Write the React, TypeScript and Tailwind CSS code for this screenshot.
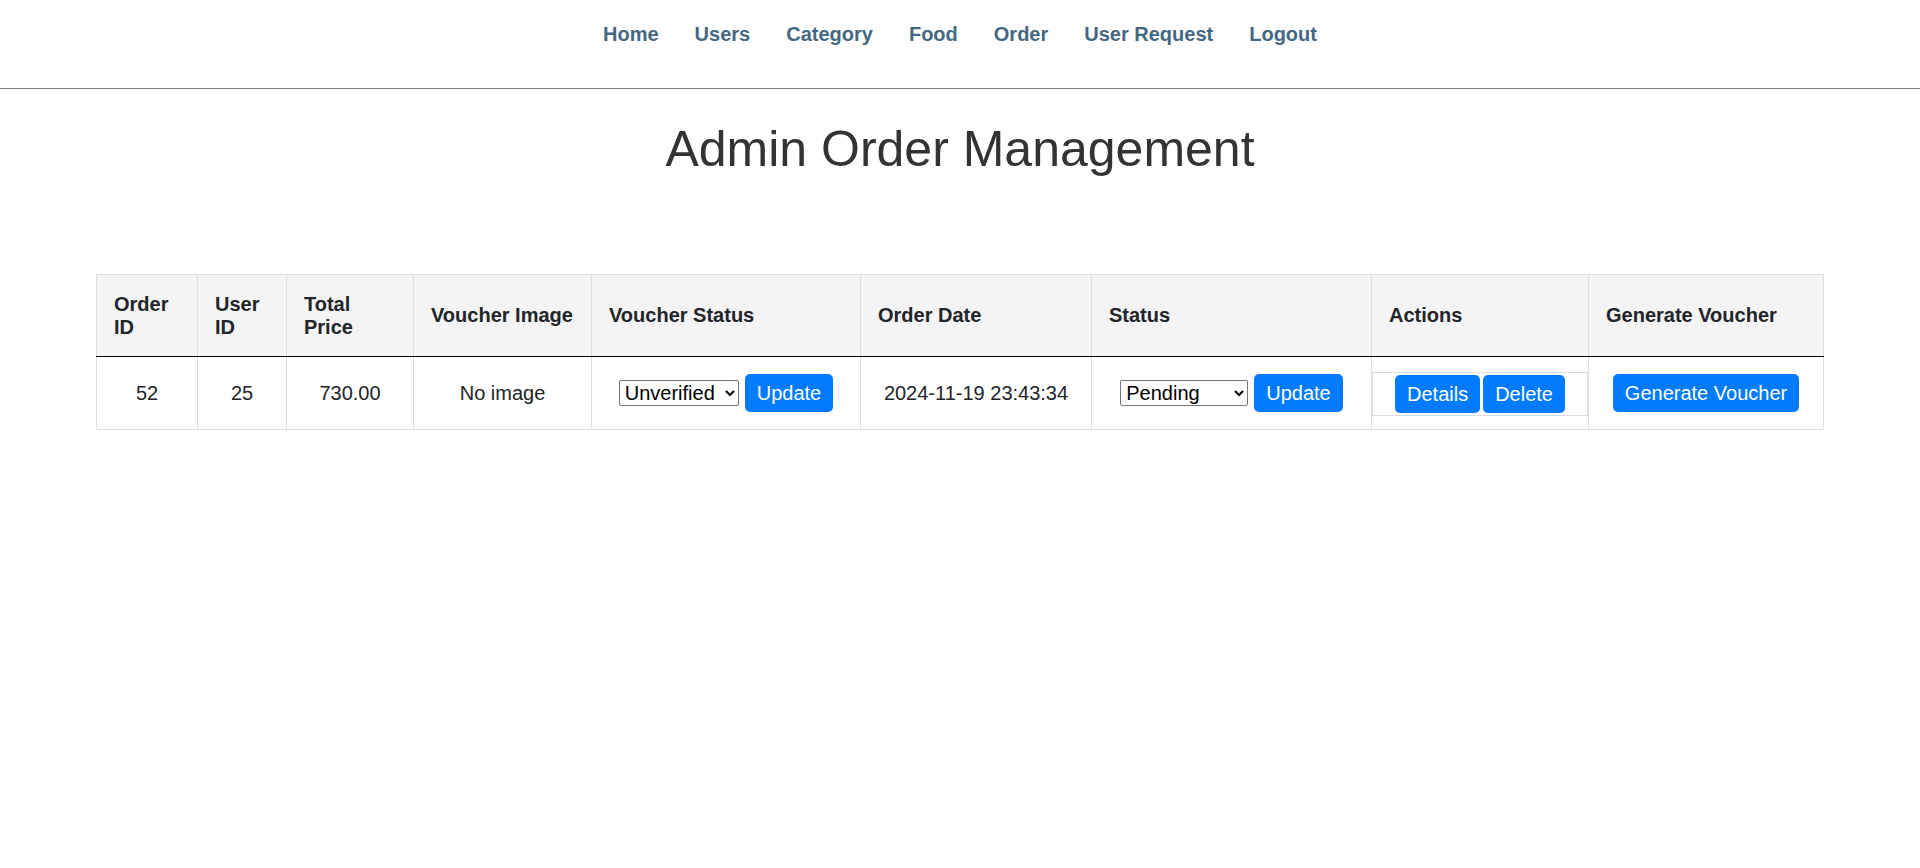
import { useState } from "react";
import type { ReactNode } from "react";

const navLinks = ["Home", "Users", "Category", "Food", "Order", "User Request", "Logout"];

const columns = [
  { label: "Order ID", width: "w-[101px]" },
  { label: "User ID", width: "w-[89px]" },
  { label: "Total Price", width: "w-[127px]" },
  { label: "Voucher Image", width: "w-[178px]" },
  { label: "Voucher Status", width: "w-[269px]" },
  { label: "Order Date", width: "w-[231px]" },
  { label: "Status", width: "w-[280px]" },
  { label: "Actions", width: "w-[217px]" },
  { label: "Generate Voucher", width: "w-[235px]" },
];

function ActionButton({ children }: { children: ReactNode }) {
  return (
    <button
      type="button"
      className="h-[38px] cursor-pointer rounded-[5px] bg-[#007bff] px-3 whitespace-nowrap text-white hover:bg-[#0056b3]"
    >
      {children}
    </button>
  );
}

function StatusForm({ label, options, width }: { label: string; options: string[]; width: string }) {
  const [value, setValue] = useState(options[0]);
  return (
    <form className="flex items-center justify-center gap-[6px]" onSubmit={(e) => e.preventDefault()}>
      <select
        aria-label={label}
        value={value}
        onChange={(e) => setValue(e.target.value)}
        className={`h-[26px] rounded-[2px] border border-[#767676] bg-white pl-px text-black ${width}`}
      >
        {options.map((option) => (
          <option key={option}>{option}</option>
        ))}
      </select>
      <ActionButton>Update</ActionButton>
    </form>
  );
}

function Cell({ children }: { children: ReactNode }) {
  return <td className="h-[73px] border-x border-b border-[#dddddd] text-center align-middle">{children}</td>;
}

export default function App() {
  return (
    <div className="min-h-screen bg-white font-['Liberation_Sans',Arial,sans-serif] text-[20px] leading-[23px] text-[#212529]">
      <header className="border-b border-[#808080] pt-[23px] pb-[42px]">
        <nav className="flex justify-center gap-9 font-bold text-[#456882]">
          {navLinks.map((link) => (
            <a key={link} href="#" className="hover:underline">
              {link}
            </a>
          ))}
        </nav>
      </header>
      <main className="px-[5%]">
        <h1 className="pt-[30px] pb-[95px] text-center text-[50px] leading-[60px] text-[#333333]">
          Admin Order Management
        </h1>
        <table className="w-full table-fixed border-collapse">
          <colgroup>
            {columns.map((column) => (
              <col key={column.label} className={column.width} />
            ))}
          </colgroup>
          <thead>
            <tr>
              {columns.map((column) => (
                <th
                  key={column.label}
                  scope="col"
                  className="h-[82px] border border-[#dddddd] border-b-black bg-[#f4f4f4] px-[17px] text-left align-middle font-bold"
                >
                  {column.label}
                </th>
              ))}
            </tr>
          </thead>
          <tbody>
            <tr>
              <Cell>52</Cell>
              <Cell>25</Cell>
              <Cell>730.00</Cell>
              <Cell>No image</Cell>
              <Cell>
                <StatusForm label="Voucher status" options={["Unverified", "Verified"]} width="w-[120px]" />
              </Cell>
              <Cell>2024-11-19 23:43:34</Cell>
              <Cell>
                <StatusForm label="Order status" options={["Pending", "Processing", "Completed"]} width="w-[128px]" />
              </Cell>
              <td className="border-x border-b border-[#dddddd] pt-[15px] pb-[13px] align-top">
                <div className="flex justify-center gap-[3px] border border-[#dddddd] py-[2px]">
                  <ActionButton>Details</ActionButton>
                  <ActionButton>Delete</ActionButton>
                </div>
              </td>
              <Cell>
                <ActionButton>Generate Voucher</ActionButton>
              </Cell>
            </tr>
          </tbody>
        </table>
      </main>
    </div>
  );
}
